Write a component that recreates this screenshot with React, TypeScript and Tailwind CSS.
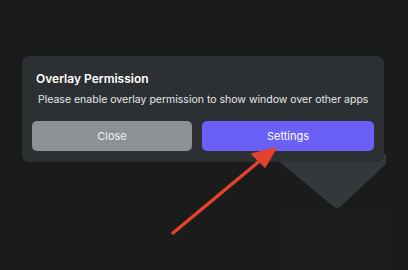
export default function App() {
  return (
    <div className="relative w-[408px] h-[270px] overflow-hidden bg-[#1a1b1b] font-['Inter',sans-serif]">
      {/* shape peeking out from under the dialog */}
      <svg className="absolute left-[270px] top-[140px]" width="130" height="130" viewBox="0 0 130 130">
        <rect x="13" y="68" width="102" height="62" fill="#1c1d1e" />
        <path d="M0 14 L116 14 L116 24 L71 66 Q67 70 63 66 Z" fill="#35383b" />
      </svg>

      <div className="pt-[56px] px-[22px]">
        <div className="relative w-[362px] h-[106px] rounded-[7px] bg-[#2d3032] pt-[15px] px-[10px]">
          <h2 className="pl-[4px] text-[12px] font-semibold text-white leading-[16px]">Overlay Permission</h2>
          <p className="mt-[6px] pl-[6px] text-[10.5px] text-[#e6e7e8] leading-[14px] whitespace-nowrap">
            Please enable overlay permission to show window over other apps
          </p>
          <div className="mt-[14px] flex gap-[10px]">
            <button className="w-[160px] h-[30px] rounded-[5px] bg-[#8e9193] text-[11px] text-[#f2f2f2]">Close</button>
            <button className="w-[172px] h-[30px] rounded-[5px] bg-[#6b60f5] text-[11px] text-white">Settings</button>
          </div>
        </div>
      </div>

      {/* annotation arrow */}
      <svg className="absolute left-0 top-0 pointer-events-none" width="408" height="270" viewBox="0 0 408 270">
        <line x1="173" y1="233" x2="262" y2="159" stroke="#e5422d" strokeWidth="3.5" strokeLinecap="round" />
        <path d="M276 148 L252 154 L265 167 Z" fill="#e5422d" stroke="#e5422d" strokeWidth="1.5" strokeLinejoin="round" />
      </svg>
    </div>
  )
}
